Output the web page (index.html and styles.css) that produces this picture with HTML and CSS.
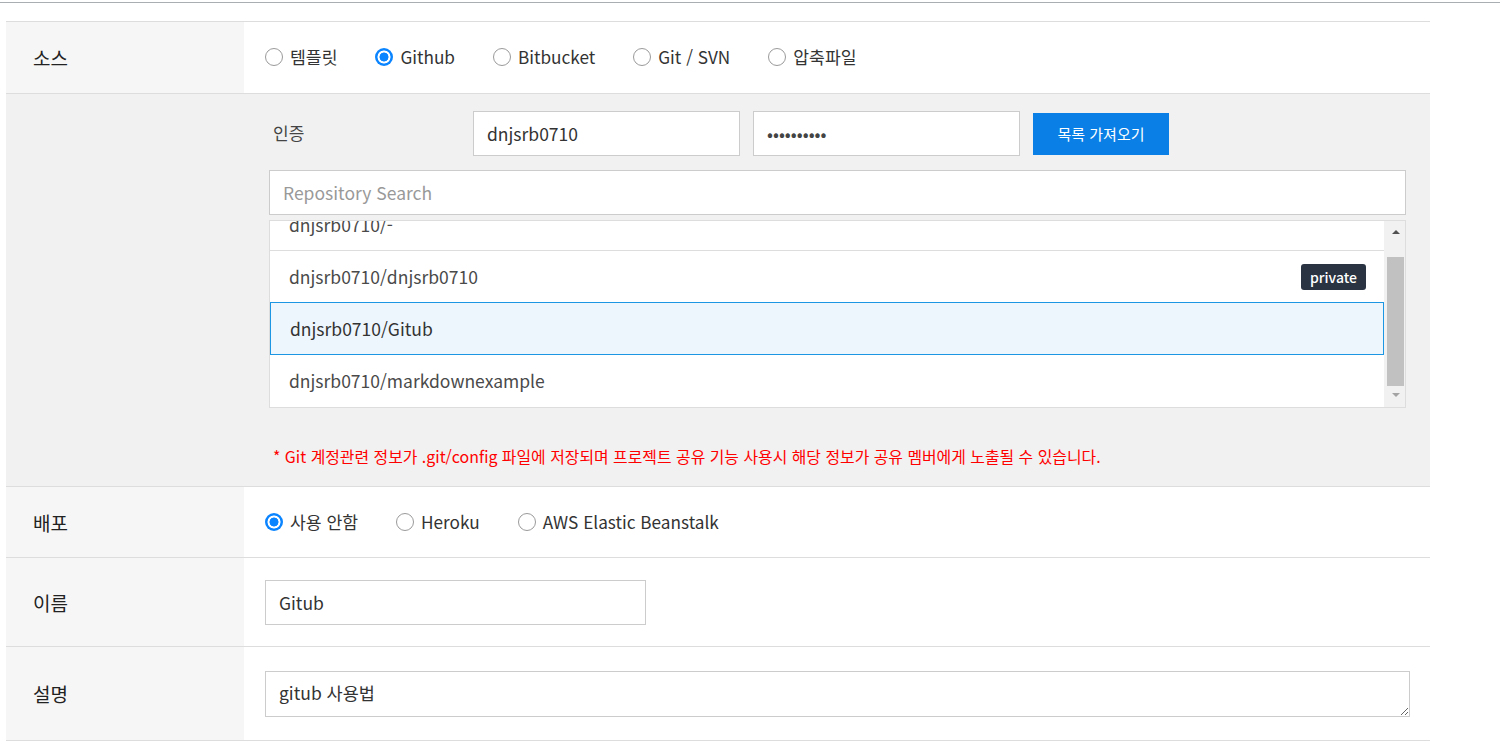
FILE: index.html
```html
<!DOCTYPE html>
<html lang="ko">
<head>
<meta charset="utf-8">
<title>Project</title>
<link rel="stylesheet" href="styles.css">
</head>
<body>
<div class="topline"></div>
<div class="form">
  <div class="row row-source">
    <div class="label">소스</div>
    <div class="content">
      <label class="opt"><span class="radio"></span>템플릿</label>
      <label class="opt"><span class="radio checked"></span>Github</label>
      <label class="opt"><span class="radio"></span>Bitbucket</label>
      <label class="opt"><span class="radio"></span>Git / SVN</label>
      <label class="opt"><span class="radio"></span>압축파일</label>
    </div>
  </div>
  <div class="row row-auth">
    <div class="label"></div>
    <div class="auth">
      <div class="auth-line">
        <div class="auth-title">인증</div>
        <input class="field" type="text" value="dnjsrb0710">
        <input class="field pw" type="password" value="dnjsrb0710">
        <button class="btn">목록 가져오기</button>
      </div>
      <input class="search" type="text" placeholder="Repository Search">
      <div class="repo-list">
        <div class="repo-items">
          <div class="repo first">dnjsrb0710/-</div>
          <div class="repo">dnjsrb0710/dnjsrb0710<span class="badge">private</span></div>
          <div class="repo selected">dnjsrb0710/Gitub</div>
          <div class="repo last">dnjsrb0710/markdownexample</div>
        </div>
        <div class="scrollbar">
          <div class="sb-up"><span class="tri-up"></span></div>
          <div class="sb-thumb"></div>
          <div class="sb-down"><span class="tri-down"></span></div>
        </div>
      </div>
      <p class="warn">* Git 계정관련 정보가 .git/config 파일에 저장되며 프로젝트 공유 기능 사용시 해당 정보가 공유 멤버에게 노출될 수 있습니다.</p>
    </div>
  </div>
  <div class="row row-deploy">
    <div class="label">배포</div>
    <div class="content">
      <label class="opt"><span class="radio checked"></span>사용 안함</label>
      <label class="opt"><span class="radio"></span>Heroku</label>
      <label class="opt"><span class="radio"></span>AWS Elastic Beanstalk</label>
    </div>
  </div>
  <div class="row row-name">
    <div class="label">이름</div>
    <div class="content">
      <input class="field name" type="text" value="Gitub">
    </div>
  </div>
  <div class="row row-desc">
    <div class="label">설명</div>
    <div class="content">
      <textarea class="desc">gitub 사용법</textarea>
    </div>
  </div>
</div>
</body>
</html>
```

FILE: styles.css
```css
* { box-sizing: border-box; }
html, body {
  margin: 0;
  padding: 0;
  background: #fff;
  font-family: "Noto Sans CJK KR", "Noto Sans", sans-serif;
  color: #333;
}
.topline {
  margin-top: 2px;
  height: 1px;
  background: #a9aeb3;
}
.form {
  margin: 18px 0 0 6px;
  width: 1424px;
  border-top: 1px solid #ddd;
}
.row {
  display: flex;
  border-bottom: 1px solid #ddd;
}
.label {
  width: 238px;
  flex: none;
  background: #f6f6f6;
  padding-left: 27px;
  display: flex;
  align-items: center;
  font-size: 19px;
  color: #222;
}
.content {
  flex: 1;
  padding-left: 21px;
  display: flex;
  align-items: center;
}
.row-source .content { height: 71px; padding-bottom: 1px; }
.row-deploy .content { height: 70px; }
.row-name .content { height: 88px; }
.row-desc .content { height: 93px; }

.opt {
  display: flex;
  align-items: center;
  font-size: 17.2px;
  color: #333;
  margin-right: 38px;
  line-height: 20px;
}
.radio {
  width: 18px;
  height: 18px;
  border-radius: 50%;
  border: 1px solid #9a9a9a;
  background: #fff;
  margin-right: 7px;
  flex: none;
}
.radio.checked {
  border: none;
  background: radial-gradient(circle, #0a84ff 0 4.2px, #fff 4.8px 6.2px, #0a84ff 6.8px);
}

.row-auth { background: #f1f1f1; }
.row-auth .label { background: #f1f1f1; }
.auth {
  flex: 1;
  padding: 17px 24px 18px 25px;
}
.auth-line {
  display: flex;
  align-items: center;
}
.auth-title {
  width: 204px;
  padding-left: 4px;
  font-size: 17px;
  color: #444;
  padding-bottom: 2px;
}
.field {
  height: 45px;
  border: 1px solid #ccc;
  background: #fff;
  font-family: inherit;
  font-size: 17.5px;
  color: #333;
  padding: 0 13px;
  outline: none;
  margin: 0;
}
.auth-line .field {
  width: 267px;
  margin-right: 13px;
}
.field.pw {
  font-size: 17.5px;
  color: #444;
}
.btn {
  width: 136px;
  height: 42px;
  border: none;
  background: #0a80e6;
  color: #fff;
  font-family: inherit;
  font-size: 15px;
  padding: 0;
  margin: 0;
}
.search {
  display: block;
  width: 100%;
  height: 45px;
  margin-top: 14px;
  border: 1px solid #ccc;
  background: #fff;
  font-family: inherit;
  font-size: 17.5px;
  padding: 0 13px;
  outline: none;
}
.search::placeholder { color: #999; }

.repo-list {
  margin-top: 5px;
  height: 188px;
  border: 1px solid #ddd;
  background: #fff;
  display: flex;
  overflow: hidden;
}
.repo-items {
  flex: 1;
  overflow: hidden;
}
.repo {
  height: 52px;
  border-bottom: 1px solid #ddd;
  display: flex;
  align-items: center;
  justify-content: space-between;
  padding: 0 18px 0 19px;
  font-size: 17.5px;
  color: #4a4a4a;
}
.repo.first { margin-top: -22px; }
.repo.selected {
  border: 1px solid #1c95e3;
  background: #eef6fd;
  color: #333;
  padding-left: 19px;
  margin-top: -1px;
  height: 53px;
}
.repo.last { border-bottom: none; padding-bottom: 2px; }
.badge {
  background: #2a3341;
  color: #fff;
  font-size: 14px;
  font-weight: 500;
  height: 26px;
  width: 65px;
  border-radius: 3px;
  display: flex;
  align-items: center;
  justify-content: center;
}
.scrollbar {
  width: 21px;
  flex: none;
  background: #f1f1f1;
  display: flex;
  flex-direction: column;
  align-items: flex-end;
}
.sb-up {
  height: 36px;
  width: 18px;
  display: flex;
  justify-content: center;
  padding-top: 9px;
}
.sb-thumb {
  height: 129px;
  width: 17px;
  margin-right: 1px;
  background: #c1c1c1;
}
.sb-down {
  width: 18px;
  flex: 1;
  display: flex;
  justify-content: center;
  padding-top: 7px;
}
.tri-up {
  width: 0; height: 0;
  border-left: 4px solid transparent;
  border-right: 4px solid transparent;
  border-bottom: 4px solid #505050;
}
.tri-down {
  width: 0; height: 0;
  border-left: 4px solid transparent;
  border-right: 4px solid transparent;
  border-top: 4px solid #a3a3a3;
}
.warn {
  margin: 38px 0 0 4px;
  color: #ff0000;
  font-size: 15.9px;
  line-height: 22px;
}
.field.name { width: 381px; }
.desc {
  width: 1145px;
  height: 46px;
  border: 1px solid #ccc;
  font-family: inherit;
  font-size: 17.5px;
  color: #333;
  padding: 10px 13px;
  margin: 0;
  outline: none;
  line-height: 22px;
  display: block;
}
```
